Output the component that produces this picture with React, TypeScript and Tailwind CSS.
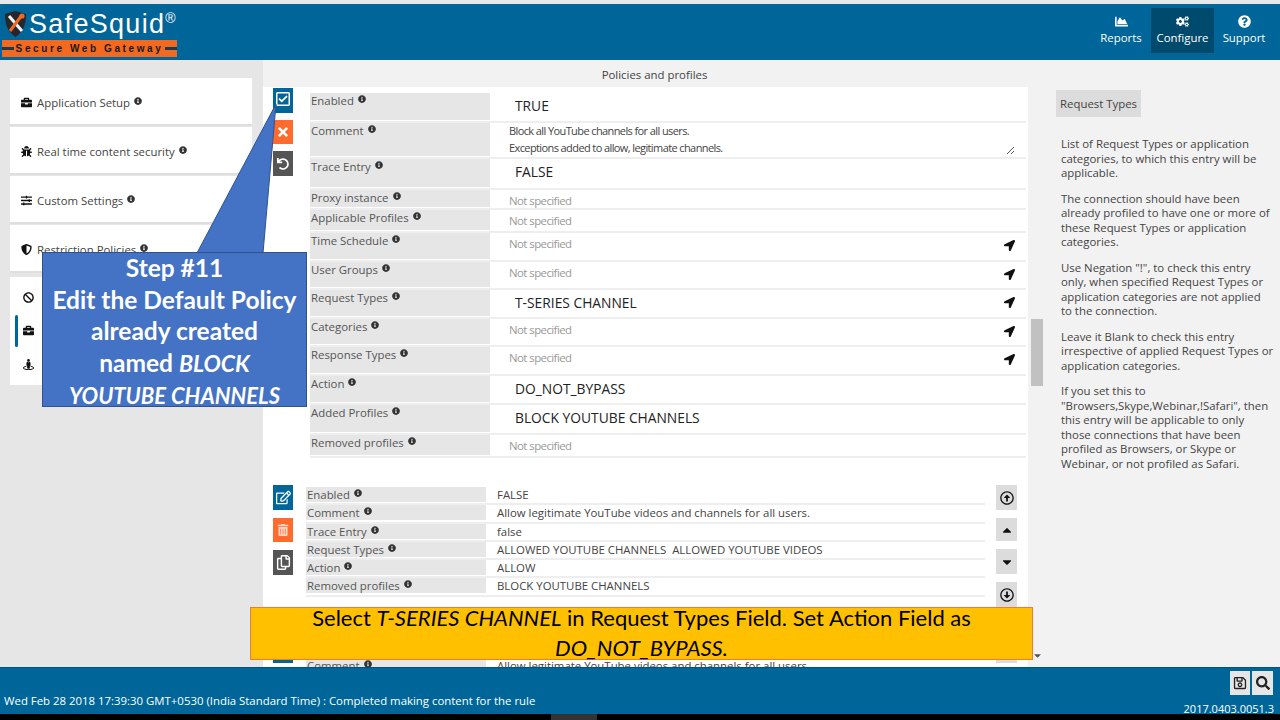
import React from "react";
import {
  FaBan,
  FaBriefcase,
  FaBug,
  FaCaretDown,
  FaCaretUp,
  FaChartArea,
  FaCogs,
  FaInfoCircle,
  FaLocationArrow,
  FaQuestionCircle,
  FaRegArrowAltCircleDown,
  FaRegArrowAltCircleUp,
  FaRegCheckSquare,
  FaRegCopy,
  FaRegEdit,
  FaRegSave,
  FaSearch,
  FaShieldAlt,
  FaSlidersH,
  FaStreetView,
  FaTimes,
  FaTrashAlt,
  FaUndo,
} from "react-icons/fa";

type Detail = {
  label: string;
  value: string;
  kind: "big" | "none";
  send?: boolean;
  height: string;
};

const details: Detail[] = [
  { label: "Enabled", value: "TRUE", kind: "big", height: "h-[30px]" },
  { label: "Trace Entry", value: "FALSE", kind: "big", height: "h-[31px]" },
  { label: "Proxy instance", value: "Not specified", kind: "none", height: "h-[20px]" },
  { label: "Applicable Profiles", value: "Not specified", kind: "none", height: "h-[23px]" },
  { label: "Time Schedule", value: "Not specified", kind: "none", send: true, height: "h-[29px]" },
  { label: "User Groups", value: "Not specified", kind: "none", send: true, height: "h-[28px]" },
  { label: "Request Types", value: "T-SERIES CHANNEL", kind: "big", send: true, height: "h-[29px]" },
  { label: "Categories", value: "Not specified", kind: "none", send: true, height: "h-[28px]" },
  { label: "Response Types", value: "Not specified", kind: "none", send: true, height: "h-[29px]" },
  { label: "Action", value: "DO_NOT_BYPASS", kind: "big", height: "h-[29px]" },
  { label: "Added Profiles", value: "BLOCK YOUTUBE CHANNELS", kind: "big", height: "h-[30px]" },
  { label: "Removed profiles", value: "Not specified", kind: "none", height: "h-[23px]" },
];

const summary = [
  ["Enabled", "FALSE"],
  ["Comment", "Allow legitimate YouTube videos and channels for all users."],
  ["Trace Entry", "false"],
  ["Request Types", "ALLOWED YOUTUBE CHANNELS  ALLOWED YOUTUBE VIDEOS"],
  ["Action", "ALLOW"],
  ["Removed profiles", "BLOCK YOUTUBE CHANNELS"],
];

const help = [
  ["List of Request Types or application", "categories, to which this entry will be", "applicable."],
  ["The connection should have been", "already profiled to have one or more of", "these Request Types or application", "categories."],
  ['Use Negation "!", to check this entry', "only, when specified Request Types or", "application categories are not applied", "to the connection."],
  ["Leave it Blank to check this entry", "irrespective of applied Request Types or", "application categories."],
  ["If you set this to", '"Browsers,Skype,Webinar,!Safari", then', "this entry will be applicable to only", "those connections that have been", "profiled as Browsers, or Skype or", "Webinar, or not profiled as Safari."],
];

const Info = () => (
  <FaInfoCircle className="inline-block ml-[4px] mb-[6px] text-[8px] text-[#333]" />
);

const Label = ({ text }: { text: string }) => (
  <>
    {text}
    <Info />
  </>
);

const SideCard = ({ icon, text }: { icon: React.ReactNode; text: string }) => (
  <div className="h-[48px] mb-[1px] bg-white border-b-2 border-[#dedede] flex items-center pl-[11px] pt-[3px] text-[11.4px] text-[#444]">
    <span className="w-[16px] text-[11px] text-[#111]">{icon}</span>
    <span>
      <Label text={text} />
    </span>
  </div>
);

const NavItem = ({ icon, text, active }: { icon: React.ReactNode; text: string; active?: boolean }) => (
  <div
    className={`h-[45px] pt-[1px] flex flex-col items-center justify-center text-[11.4px] text-white ${
      active ? "w-[63px] bg-[#004a6e]" : "w-[60px]"
    }`}
  >
    <span className="text-[13px] h-[14px]">{icon}</span>
    <span className="leading-[18px]">{text}</span>
  </div>
);

const SquareBtn = ({ color, height, icon }: { color: string; height: string; icon: React.ReactNode }) => (
  <div className={`w-[20px] ${height} ${color} flex items-center justify-center text-white text-[14px]`}>
    {icon}
  </div>
);

const SummaryBlock = () => (
  <div className="flex pl-[10px]">
    <div className="flex flex-col gap-[8px]">
      <SquareBtn color="bg-[#006699]" height="h-[25px]" icon={<FaRegEdit className="text-[15px]" />} />
      <SquareBtn color="bg-[#ff6b2c]" height="h-[24px]" icon={<FaTrashAlt className="text-[12px] text-[#ffd9c8]" />} />
      <SquareBtn color="bg-[#555555]" height="h-[25px]" icon={<FaRegCopy className="text-[15px]" />} />
    </div>
    <div className="ml-[13px] w-[679px] pt-[2px]">
      {summary.map(([k, v]) => (
        <div key={k} className="h-[18.3px] flex border-b-2 border-[#eeeeee] text-[11.4px] leading-[15px]">
          <div className="w-[180px] h-[15px] bg-[#e6e6e6] pl-[1px] text-[#555]">
            <Label text={k} />
          </div>
          <div className="pl-[11px] text-[#444] whitespace-pre">{v}</div>
        </div>
      ))}
    </div>
    <div className="ml-[11px] flex flex-col gap-[8px] text-[#111]">
      <div className="w-[21px] h-[25px] bg-[#dcdcdc] flex items-center justify-center text-[14px]"><FaRegArrowAltCircleUp /></div>
      <div className="w-[21px] h-[23px] bg-[#dcdcdc] flex items-center justify-center text-[14px]"><FaCaretUp /></div>
      <div className="w-[21px] h-[25px] bg-[#dcdcdc] flex items-center justify-center text-[14px]"><FaCaretDown /></div>
      <div className="w-[21px] h-[25px] bg-[#dcdcdc] flex items-center justify-center text-[14px]"><FaRegArrowAltCircleDown /></div>
    </div>
  </div>
);

const DetailRow = ({ row }: { row: Detail }) => (
  <div className={`${row.height} flex border-b-2 border-[#eeeeee]`}>
    <div className="w-[180px] mb-[1px] bg-[#e6e6e6] pl-[1px] text-[11.4px] leading-[14px] pt-[1px] text-[#555]">
      <Label text={row.label} />
    </div>
    {row.kind === "big" ? (
      <div className="flex-1 pl-[25px] pt-[4px] text-[13.8px] leading-[18px] text-[#222]">{row.value}</div>
    ) : (
      <div className="flex-1 pl-[19px] pt-[2.5px] text-[11.4px] leading-[16px] tracking-[-0.55px] text-[#999]">{row.value}</div>
    )}
    {row.send && <FaLocationArrow className="mr-[11px] mt-[7px] text-[11px] text-[#111]" />}
  </div>
);

const App = () => {
  return (
    <div className="relative w-[1280px] h-[720px] overflow-hidden flex flex-col bg-[#e6e6e6] font-['Open_Sans',sans-serif]">
      <div className="h-[4px] bg-[#e8e8e8]" />

      <header className="h-[56px] bg-[#006699] flex items-start justify-between">
        <div className="relative w-[180px] h-[56px]">
          <div className="flex items-center pl-[4px] pt-[4px]">
            <svg width="23" height="26" viewBox="0 0 23 26">
              <path d="M1 3 L11.5 0 L22 3 C22 14 19 21 11.5 26 C4 21 1 14 1 3 Z" fill="#26262c" />
              <path d="M5 5 L18 20" stroke="#f4f4f4" strokeWidth="3" />
              <path d="M18 4 L6 20" stroke="#f26a21" strokeWidth="3" />
              <circle cx="18" cy="5" r="2.6" fill="#f26a21" />
            </svg>
            <span className="ml-[2px] text-[27px] leading-[32px] tracking-[1.3px] text-white font-['Liberation_Sans',sans-serif]">
              SafeSquid
            </span>
            <span className="mb-[12px] text-[14px] leading-[16px] text-white font-['Liberation_Sans',sans-serif]">®</span>
          </div>
          <div className="mx-[2px] w-[175px] h-[17px] bg-[#f26a21] flex items-center justify-between">
            <span className="w-[12px] h-[3px] bg-[#1d3b4f]" />
            <span className="text-[10px] font-bold tracking-[2.6px] text-[#1a1a1a] font-['Liberation_Sans',sans-serif]">
              Secure Web Gateway
            </span>
            <span className="w-[12px] h-[3px] bg-[#1d3b4f]" />
          </div>
        </div>
        <nav className="flex items-center pt-[4px] pr-[6px]">
          <NavItem icon={<FaChartArea />} text="Reports" />
          <NavItem icon={<FaCogs />} text="Configure" active />
          <NavItem icon={<FaQuestionCircle />} text="Support" />
        </nav>
      </header>

      <div className="flex-1 flex min-h-0">
        <aside className="w-[263px] pt-[18px] px-[10px] pr-[11px]">
          <SideCard icon={<FaBriefcase />} text="Application Setup" />
          <SideCard icon={<FaBug />} text="Real time content security" />
          <SideCard icon={<FaSlidersH />} text="Custom Settings" />
          <SideCard icon={<FaShieldAlt />} text="Restriction Policies" />
          <div className="mt-[4px] h-[108px] bg-white flex flex-col pt-[3px] text-[11px] text-[#111]">
            <div className="h-[34px] pl-[13px] flex items-center"><FaBan /></div>
            <div className="h-[33px] pl-[5px] flex items-center">
              <span className="w-[3px] h-[32px] bg-[#006699] rounded-[2px]" />
              <FaBriefcase className="ml-[5px]" />
            </div>
            <div className="h-[34px] pl-[13px] flex items-center"><FaStreetView /></div>
          </div>
        </aside>

        <div className="flex-1 flex flex-col min-w-0">
          <div className="flex min-h-0 flex-1">
            <div className="w-[783px] flex flex-col min-h-0">
              <div className="h-[27px] bg-[#f2f2f2] text-center text-[11.4px] leading-[30px] text-[#444]">
                Policies and profiles
              </div>
              <div className="flex-1 flex min-h-0">
                <main className="w-[765px] bg-white overflow-hidden">
                  <div className="flex pl-[10px] pt-[1px]">
                    <div className="flex flex-col gap-[7px]">
                      <SquareBtn color="bg-[#006699]" height="h-[25px]" icon={<FaRegCheckSquare className="text-[16px] mb-[3px]" />} />
                      <SquareBtn color="bg-[#ff6b2c]" height="h-[24px]" icon={<FaTimes />} />
                      <SquareBtn color="bg-[#555555]" height="h-[25px]" icon={<FaUndo className="text-[12px]" />} />
                    </div>
                    <div className="ml-[17px] w-[716px] pt-[5px]">
                      <DetailRow row={details[0]} />
                      <div className="h-[36px] flex border-b-2 border-[#eeeeee]">
                        <div className="w-[180px] mb-[1px] bg-[#e6e6e6] pl-[1px] pt-[1px] text-[11.4px] leading-[14px] text-[#555]">
                          <Label text="Comment" />
                        </div>
                        <div className="relative flex-1 pl-[19px] text-[11px] leading-[17px] tracking-[-0.6px] text-[#444]">
                          <div className="-mt-[1px]">
                            Block all YouTube channels for all users.
                            <br />
                            Exceptions added to allow, legitimate channels.
                          </div>
                          <svg className="absolute right-[11px] bottom-[2px]" width="9" height="9" viewBox="0 0 9 9">
                            <path d="M1 8 L8 1 M5 8 L8 5" stroke="#555" strokeWidth="1" />
                          </svg>
                        </div>
                      </div>
                      {details.slice(1).map((row) => (
                        <DetailRow key={row.label} row={row} />
                      ))}
                    </div>
                  </div>
                  <div className="mt-[27px]">
                    <SummaryBlock />
                  </div>
                  <div className="mt-[31px]">
                    <SummaryBlock />
                  </div>
                </main>
                <div className="w-[18px] bg-[#f2f2f2] flex flex-col items-center">
                  <div className="mt-[232px] w-[12px] h-[67px] bg-[#c1c1c1]" />
                  <FaCaretDown className="mt-[264px] text-[11px] text-[#555]" />
                </div>
              </div>
            </div>

            <section className="flex-1 bg-[#f2f2f2] pl-[10px] pt-[30px]">
              <div className="w-[85px] h-[27px] bg-[#dcdcdc] text-center text-[11.4px] leading-[27px] text-[#444]">
                Request Types
              </div>
              <div className="mt-[20px] pl-[5px] text-[11.4px] leading-[14.5px] text-[#444]">
                {help.map((para, i) => (
                  <p key={i} className="mb-[11px] whitespace-nowrap">
                    {para.map((line) => (
                      <span key={line} className="block">
                        {line}
                      </span>
                    ))}
                  </p>
                ))}
              </div>
            </section>
          </div>
        </div>
      </div>

      <footer className="h-[47px] bg-[#006699] border-t border-[#00557f] flex justify-between text-white text-[11.4px]">
        <div className="pl-[4px] pt-[24px]">
          Wed Feb 28 2018 17:39:30 GMT+0530 (India Standard Time) : Completed making content for the rule
        </div>
        <div className="pr-[6px] pt-[3px] flex flex-col items-end">
          <div className="pr-[1px] flex gap-[2px] text-[#222]">
            <div className="w-[20px] h-[24px] bg-[#e6e6e6] flex items-center justify-center text-[14px]"><FaRegSave /></div>
            <div className="w-[21px] h-[24px] bg-[#e6e6e6] flex items-center justify-center text-[14px]"><FaSearch /></div>
          </div>
          <div className="leading-[18px] mt-[5px] text-[11px]">2017.0403.0051.3</div>
        </div>
      </footer>
      <div className="h-[6px] bg-black pl-[551px]">
        <div className="w-[46px] h-[6px] bg-[#333333]" />
      </div>

      {/* callout and note sit over the page */}
      <svg className="absolute left-[190px] top-[100px]" width="90" height="154" viewBox="0 0 90 154">
        <path d="M7 153 L86 4 L73 153 Z" fill="#4472c4" stroke="#2f528f" strokeWidth="1" />
      </svg>
      <div className="absolute left-[42px] top-[252px] w-[265px] h-[155px] bg-[#4472c4] border border-[#2f528f] text-center text-white font-['Lato',sans-serif] font-bold text-[24.5px] leading-[31.5px]">
        <div className="-mt-[1px]">
          Step #11
          <br />
          Edit the Default Policy
          <br />
          already created
          <br />
          named <i className="text-[23px]">BLOCK</i>
          <br />
          <i className="text-[22px]">YOUTUBE CHANNELS</i>
        </div>
      </div>
      <div className="absolute left-[250px] top-[607px] w-[783px] h-[53px] bg-[#ffc000] border border-[#ed7d31] text-center text-black font-['Lato',sans-serif] text-[22px] leading-[30px]">
        <div className="-mt-[5px]">
          Select <i>T-SERIES CHANNEL</i> in Request Types Field. Set Action Field as
          <br />
          <i>DO_NOT_BYPASS.</i>
        </div>
      </div>
    </div>
  );
};

export default App;
